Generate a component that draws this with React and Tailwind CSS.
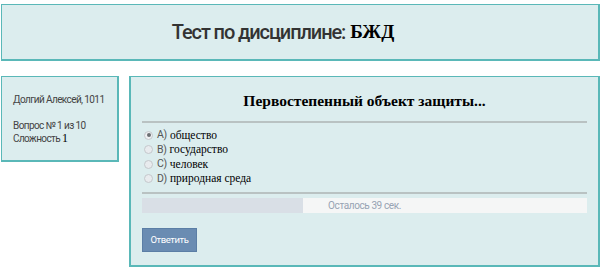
export default function App() {
  const sans = { fontFamily: '"Roboto", "Liberation Sans", sans-serif' };
  const serif = { fontFamily: '"Liberation Serif", "Times New Roman", serif' };
  const options = [
    ["A)", "общество", true],
    ["B)", "государство", false],
    ["C)", "человек", false],
    ["D)", "природная среда", false],
  ];
  return (
    <div className="w-[602px] h-[272px] bg-white pt-[4px] overflow-hidden">
      <div className="ml-[1px] mr-[2px] h-[57px] bg-[#dcedee] border border-r-2 border-b-2 border-[#5ab8b8] flex items-center justify-center pr-[34px]">
        <span className="text-[20px] text-[#333] font-medium tracking-[-1.1px]" style={sans}>Тест по дисциплине:</span>
        <span className="ml-[5px] text-[19px] text-black font-bold" style={serif}>БЖД</span>
      </div>
      <div className="flex items-start mt-[15px] ml-[1px] gap-[10px]">
        <div className="w-[118px] h-[86px] bg-[#dcedee] border border-r-2 border-b-2 border-[#5ab8b8] pl-[11px] pt-[16px] text-[10px] leading-[13px] text-[#444] tracking-[-0.6px]" style={sans}>
          <div>Долгий Алексей, 1011</div>
          <div className="mt-[13px]">Вопрос № 1 из 10</div>
          <div>Сложность <span className="text-black text-[12px] tracking-normal" style={serif}>1</span></div>
        </div>
        <div className="w-[471px] h-[191px] bg-[#dcedee] border border-r-2 border-b-2 border-l-2 border-[#5ab8b8] px-[11px] pt-[13px]">
          <div className="text-center text-[15.5px] leading-[22px] font-bold text-black" style={serif}>Первостепенный объект защиты...</div>
          <div className="mt-[9px] h-[2px] bg-[#b9c2c2]" />
          <div className="mt-[5px] pl-[2px]">
            {options.map(([l, t, c]) => (
              <div key={l} className="flex items-center h-[14.5px] text-[11px]">
                <span className={`w-[9px] h-[9px] rounded-full border border-[#c4c8cc] flex items-center justify-center ${c ? "bg-[#eef0f2]" : "bg-[#e8ebee]"}`}>
                  {c && <span className="w-[4px] h-[4px] rounded-full bg-[#6b6f73]" />}
                </span>
                <span className="ml-[4px] text-[#555] text-[10.5px] tracking-[-0.3px]" style={sans}>{l}</span>
                <span className="ml-[3px] text-black text-[11.5px]" style={serif}>{t}</span>
              </div>
            ))}
          </div>
          <div className="mt-[6px] h-[2px] bg-[#b9c2c2]" />
          <div className="mt-[4px] h-[15px] bg-[#f5f6f6] relative flex">
            <div className="w-[161px] h-full bg-[#d9dfe6]" />
            <div className="absolute inset-0 flex items-center justify-center text-[10px] tracking-[-0.4px] text-[#97a3b3]" style={sans}>Осталось 39 сек.</div>
          </div>
          <button className="mt-[15px] w-[55px] h-[24px] bg-[#6a8cb2] border border-[#5b7ea5] text-white text-[9.5px] tracking-[-0.4px]" style={sans}>Ответить</button>
        </div>
      </div>
    </div>
  );
}
